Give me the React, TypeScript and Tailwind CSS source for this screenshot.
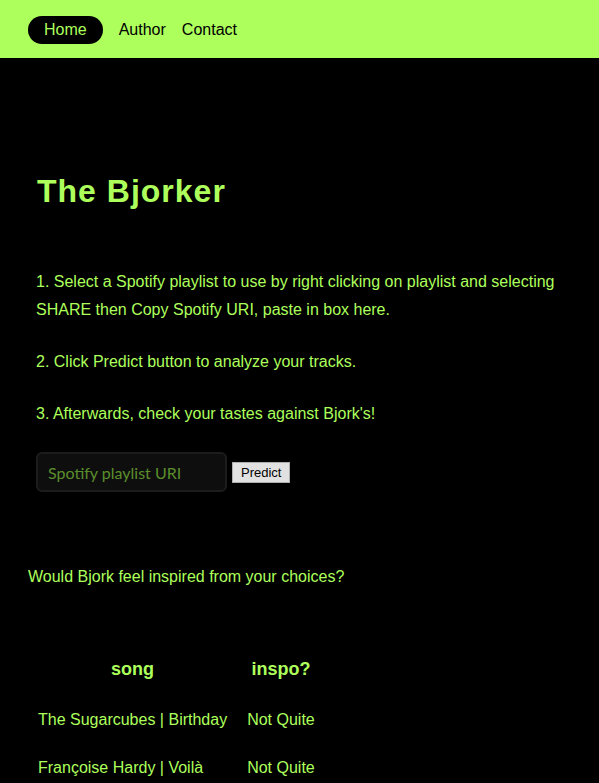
import { useState } from 'react';

const rows = [
	{ song: 'The Sugarcubes | Birthday', inspo: 'Not Quite' },
	{ song: 'Françoise Hardy | Voilà', inspo: 'Not Quite' },
];

export default function App() {
	const [uri, setUri] = useState('');

	return (
		<div className="min-h-[783px] bg-black text-[#adff5c] font-['Liberation_Sans',Arial,sans-serif]">
			<nav className="h-[58px] bg-[#adff5c] flex items-center px-7 gap-4 text-base pt-px">
				<a className="bg-black text-[#adff5c] rounded-full px-4 h-[28px] flex items-center">Home</a>
				<a className="text-black">Author</a>
				<a className="text-black">Contact</a>
			</nav>

			<section className="px-9 pt-[115px]">
				<h1 className="text-[32px] leading-[37px] font-bold tracking-[1px] pl-px">The Bjorker</h1>

				<div className="mt-[58px] text-base leading-7">
					<p>
						1. Select a Spotify playlist to use by right clicking on playlist and selecting SHARE then Copy
						Spotify URI, paste in box here.
					</p>
					<p className="mt-6">2. Click Predict button to analyze your tracks.</p>
					<p className="mt-6">3. Afterwards, check your tastes against Bjork's!</p>
				</div>

				<div className="mt-[24px] flex items-center">
					<input
						value={uri}
						onChange={(e) => setUri(e.target.value)}
						placeholder="Spotify playlist URI"
						className="w-[191px] h-[40px] bg-[#0e0e0e] border-2 border-[#1c1c1c] rounded-md px-[10px] text-base text-[#adff5c] placeholder:text-[#5c8f2c] font-['Lato',sans-serif] outline-none"
					/>
					<button className="ml-[5px] h-[21px] px-[8px] bg-[#e1e1e1] border border-[#adadad] text-black text-[13px] leading-none font-['Liberation_Sans',Arial,sans-serif]">
						Predict
					</button>
				</div>
			</section>

			<section className="px-7 mt-[76px]">
				<p className="text-base leading-[18px]">Would Bjork feel inspired from your choices?</p>

				<table className="mt-[56px] border-collapse">
					<thead>
						<tr>
							<th className="px-[10px] py-[15px] text-lg font-bold leading-[24px] text-center">song</th>
							<th className="px-[10px] py-[15px] text-lg font-bold leading-[24px] text-center">inspo?</th>
						</tr>
					</thead>
					<tbody>
						{rows.map((r) => (
							<tr key={r.song}>
								<td className="px-[10px] py-[15px] text-base leading-[18px]">{r.song}</td>
								<td className="px-[10px] py-[15px] text-base leading-[18px]">{r.inspo}</td>
							</tr>
						))}
					</tbody>
				</table>
			</section>
		</div>
	);
}
